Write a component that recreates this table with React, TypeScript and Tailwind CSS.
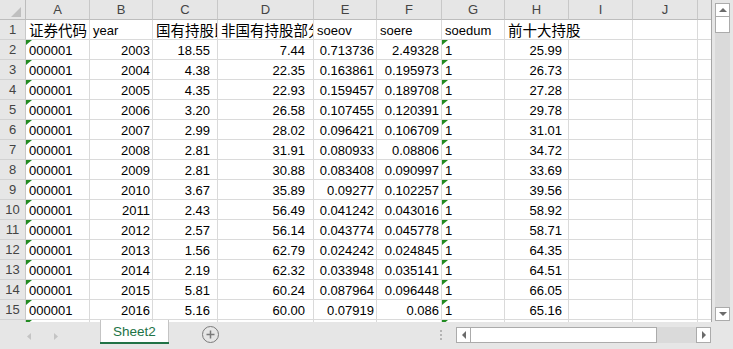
import React from "react";

const COLS = ["A", "B", "C", "D", "E", "F", "G", "H", "I", "J", ""];

// right padding per column for numeric cells
const PAD = ["", "pr-[2px]", "pr-[7px]", "pr-[8px]", "pr-[2px]", "pr-[2px]", "", "pr-[6px]", "", "", ""];

const ROWS: [string, string, string, string, string, string, string, string][] = [
  ["000001", "2003", "18.55", "7.44", "0.713736", "2.49328", "1", "25.99"],
  ["000001", "2004", "4.38", "22.35", "0.163861", "0.195973", "1", "26.73"],
  ["000001", "2005", "4.35", "22.93", "0.159457", "0.189708", "1", "27.28"],
  ["000001", "2006", "3.20", "26.58", "0.107455", "0.120391", "1", "29.78"],
  ["000001", "2007", "2.99", "28.02", "0.096421", "0.106709", "1", "31.01"],
  ["000001", "2008", "2.81", "31.91", "0.080933", "0.08806", "1", "34.72"],
  ["000001", "2009", "2.81", "30.88", "0.083408", "0.090997", "1", "33.69"],
  ["000001", "2010", "3.67", "35.89", "0.09277", "0.102257", "1", "39.56"],
  ["000001", "2011", "2.43", "56.49", "0.041242", "0.043016", "1", "58.92"],
  ["000001", "2012", "2.57", "56.14", "0.043774", "0.045778", "1", "58.71"],
  ["000001", "2013", "1.56", "62.79", "0.024242", "0.024845", "1", "64.35"],
  ["000001", "2014", "2.19", "62.32", "0.033948", "0.035141", "1", "64.51"],
  ["000001", "2015", "5.81", "60.24", "0.087964", "0.096448", "1", "66.05"],
  ["000001", "2016", "5.16", "60.00", "0.07919", "0.086", "1", "65.16"],
];

function Flag() {
  return (
    <svg className="absolute left-0 top-0" width="6" height="6" viewBox="0 0 6 6">
      <polygon points="0,0 6,0 0,5" fill="#228b22" />
    </svg>
  );
}

function Cell({
  children,
  right,
  pad,
  flag,
  clip = true,
  noRight,
}: {
  children?: React.ReactNode;
  right?: boolean;
  pad?: string;
  flag?: boolean;
  clip?: boolean;
  noRight?: boolean;
}) {
  return (
    <div
      className={`relative flex items-end whitespace-nowrap border-b border-[#dadada] leading-[16px] text-black ${
        noRight ? "" : "border-r"
      } ${clip ? "overflow-hidden" : "overflow-visible"} ${
        right ? `justify-end ${pad || "pr-[2px]"}` : "pl-[3px]"
      }`}
    >
      {flag && <Flag />}
      {children}
    </div>
  );
}

function Btn({ dir }: { dir: "up" | "down" | "left" | "right" }) {
  const pts = {
    up: "0,4 4,0 8,4",
    down: "0,0 8,0 4,4",
    left: "4,0 4,8 0,4",
    right: "0,0 0,8 4,4",
  }[dir];
  const vertical = dir === "up" || dir === "down";
  return (
    <div className="flex items-center justify-center bg-white border border-[#ababab] w-full h-full">
      <svg width={vertical ? 8 : 4} height={vertical ? 4 : 8}>
        <polygon points={pts} fill="#6b6b6b" />
      </svg>
    </div>
  );
}

export default function App() {
  const cjk = "text-[14.5px]";
  return (
    <div className="w-[733px] h-[349px] bg-[#e6e6e6] flex flex-col overflow-hidden font-['Liberation_Sans','Noto_Sans_CJK_SC',sans-serif] text-[13px]">
      <div className="flex h-[322px] shrink-0">
        {/* sheet grid */}
        <div className="w-[712px] h-full overflow-hidden bg-white border-r border-[#a6a6a6]">
          <div className="grid grid-cols-[26px_64px_63px_65px_96px_63px_65px_63px_64px_64px_65px_40px] auto-rows-[20px]">
            {/* header row */}
            <div className="relative bg-[#e6e6e6] border-r border-b border-[#bdbdbd]">
              <svg className="absolute right-[4px] bottom-[2px]" width="10" height="10" viewBox="0 0 10 10">
                <polygon points="10,0 10,10 0,10" fill="#bfbfbf" />
              </svg>
            </div>
            {COLS.map((c, i) => (
              <div
                key={i}
                className="flex items-center justify-center bg-[#e6e6e6] border-r border-b border-r-[#c8c8c8] border-b-[#bdbdbd] text-[#444]"
              >
                {c}
              </div>
            ))}

            {/* row 1: titles */}
            <div className="flex items-center justify-center bg-[#e6e6e6] border-r border-b border-r-[#c8c8c8] border-b-[#d2d2d2] text-[#444]">
              1
            </div>
            <Cell><span className={cjk}>证券代码</span></Cell>
            <Cell>year</Cell>
            <Cell><span className={cjk}>国有持股比例</span></Cell>
            <Cell><span className={cjk}>非国有持股部分</span></Cell>
            <Cell>soeov</Cell>
            <Cell>soere</Cell>
            <Cell>soedum</Cell>
            <Cell clip={false} noRight><span className={cjk}>前十大持股</span></Cell>
            <Cell />
            <Cell />
            <Cell />

            {ROWS.map((r, ri) => (
              <React.Fragment key={ri}>
                <div className="flex items-center justify-center bg-[#e6e6e6] border-r border-b border-r-[#c8c8c8] border-b-[#d2d2d2] text-[#444]">
                  {ri + 2}
                </div>
                {r.map((v, ci) => (
                  <Cell
                    key={ci}
                    right={ci !== 0 && ci !== 6}
                    pad={PAD[ci]}
                    flag={ci === 0 || ci === 6}
                  >
                    {v}
                  </Cell>
                ))}
                <Cell />
                <Cell />
                <Cell />
              </React.Fragment>
            ))}

            {/* row 16, only its top edge shows */}
            <div className="bg-[#e6e6e6] border-r border-[#c8c8c8]" />
            {COLS.map((_, ci) => (
              <Cell key={ci} flag={ci === 0 || ci === 6} />
            ))}
          </div>
        </div>

        {/* vertical scrollbar */}
        <div className="flex-1 flex flex-col items-center pt-[3px] pb-[1px]">
          <div className="w-[15px] h-[14px]"><Btn dir="up" /></div>
          <div className="w-[15px] h-[16px] bg-white border border-t-0 border-[#ababab]" />
          <div className="w-[15px] flex-1 bg-[#dadada]" />
          <div className="w-[15px] h-[14px]"><Btn dir="down" /></div>
        </div>
      </div>

      {/* sheet tabs bar */}
      <div className="flex items-start h-[27px]">
        <div className="w-[100px] h-full flex items-center gap-[23px] pl-[27px] pt-[1px]">
          <svg width="4" height="7"><polygon points="4,0 4,7 0,3.5" fill="#c4c4c4" /></svg>
          <svg width="4" height="7"><polygon points="0,0 0,7 4,3.5" fill="#c4c4c4" /></svg>
        </div>
        <div className="w-[69px] h-[24px] -mt-[2px] bg-white border-x border-[#c4c4c4] flex flex-col">
          <div className="flex-1 flex items-center justify-center text-[13.5px] text-[#217346] pt-[2px]">
            Sheet2
          </div>
          <div className="h-[2px] -mx-px bg-[#217346]" />
        </div>
        <div className="ml-[33px] mt-[4px] w-[17px] h-[17px] rounded-full border-[1.5px] border-[#7a7a7a] flex items-center justify-center">
          <svg width="9" height="9" viewBox="0 0 9 9">
            <path d="M4.5 0.5v8M0.5 4.5h8" stroke="#7a7a7a" strokeWidth="1.5" />
          </svg>
        </div>
        <div className="ml-[221px] mt-[8px] flex flex-col gap-[2px]">
          <div className="w-[2px] h-[2px] bg-[#b4b4b4]" />
          <div className="w-[2px] h-[2px] bg-[#b4b4b4]" />
          <div className="w-[2px] h-[2px] bg-[#b4b4b4]" />
        </div>
        {/* horizontal scrollbar */}
        <div className="ml-[14px] mt-[5px] w-[255px] h-[16px] flex">
          <div className="w-[15px] h-full"><Btn dir="left" /></div>
          <div className="w-[186px] h-full bg-white border border-l-0 border-[#ababab]" />
          <div className="flex-1 h-full bg-[#dadada]" />
          <div className="w-[15px] h-full"><Btn dir="right" /></div>
        </div>
      </div>
    </div>
  );
}
